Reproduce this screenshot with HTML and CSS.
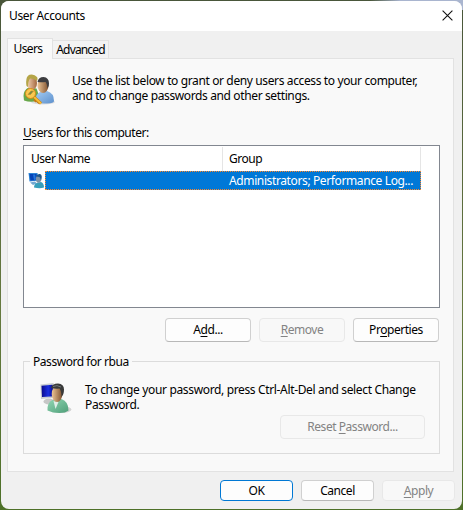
FILE: index.html
```html
<!DOCTYPE html>
<html lang="en">
<head>
    <meta charset="UTF-8">
    <meta name="viewport" content="width=device-width, initial-scale=1.0">
    <title>User Accounts</title>
    <link rel="stylesheet" href="styles.css">
</head>
<body>
    <!-- shared gradients -->
    <svg width="0" height="0" class="defs">
        <defs>
            <linearGradient id="screen" x1="0" y1="0" x2="1" y2="0">
                <stop offset="0" stop-color="#0a0a8c"/>
                <stop offset="0.5" stop-color="#1a2fe0"/>
                <stop offset="1" stop-color="#000070"/>
            </linearGradient>
            <linearGradient id="skin" x1="0" y1="0" x2="1" y2="0">
                <stop offset="0" stop-color="#edc596"/>
                <stop offset="1" stop-color="#80522f"/>
            </linearGradient>
            <linearGradient id="fair" x1="0" y1="0" x2="1" y2="0">
                <stop offset="0" stop-color="#f4d3b4"/>
                <stop offset="1" stop-color="#a4683f"/>
            </linearGradient>
            <linearGradient id="green" x1="0" y1="0" x2="1" y2="1">
                <stop offset="0" stop-color="#91d6b3"/>
                <stop offset="1" stop-color="#4f9f79"/>
            </linearGradient>
            <linearGradient id="blue" x1="0" y1="0" x2="1" y2="1">
                <stop offset="0" stop-color="#a5cdf3"/>
                <stop offset="1" stop-color="#5d90cd"/>
            </linearGradient>
        </defs>
    </svg>

    <div class="window">
        <header class="titlebar">
            <span class="title">User Accounts</span>
            <svg class="close" width="11" height="11" viewBox="0 0 11 11">
                <path d="M.6.6l9.8 9.8M10.4.6L.6 10.4" fill="none" stroke="#111" stroke-width="1.1"/>
            </svg>
        </header>

        <nav class="tabs">
            <div class="tab active">Users</div>
            <div class="tab">Advanced</div>
        </nav>

        <main class="panel">
            <div class="intro">
                <svg width="32" height="32" viewBox="0 0 32 32">
                    <ellipse cx="20" cy="28" rx="12" ry="2.5" fill="#ccc" opacity=".6"/>
                    <path d="M.5 22q0-6 5-8.500l8 1 4 11q-8 4-16.500 1z" fill="#69a84b"/>
                    <ellipse cx="9" cy="9" rx="5" ry="7" fill="url(#fair)"/>
                    <path d="M3.500 12q-1.500-9 3-11.200Q11-.5 14 3q1 1.500 0 4-3-3-7-2.500Q5 7 5 13z" fill="#b5a548"/>
                    <path d="M13 28q-1-8 4-10l7-1q7 2 7 10 0 2-7 2.500-7 .5-11-1.500z" fill="url(#blue)"/>
                    <ellipse cx="20" cy="11.500" rx="5.500" ry="7.500" fill="url(#skin)"/>
                    <path d="M14.500 8q1-5 6-5 5.500.5 5.500 6.500 0 3-1.500 5-.5-5-2-6.500-4 .5-8 0z" fill="#3d3d40"/>
                    <path d="M10 22l8 7.500M13.500 25l-2 2.500M16 27l-1.500 2" fill="none" stroke="#c57a10" stroke-width="3"/>
                    <path d="M10 22l8 7.500" fill="none" stroke="#f8bd35" stroke-width="2"/>
                    <circle cx="7.500" cy="19.500" r="5" fill="#f9c950" stroke="#d48a18"/>
                    <path d="M5 20.500l3-3.500h2.500l-3 3.500z" fill="#718e4a" stroke="#c88a24" stroke-width=".6"/>
                </svg>
                <p>Use the list below to grant or deny users access to your computer,<br>and to change passwords and other settings.</p>
            </div>

            <div class="list-label"><u>U</u>sers for this computer:</div>
            <div class="list">
                <div class="row head">
                    <span class="col">User Name</span>
                    <span class="col">Group</span>
                </div>
                <div class="row user">
                    <svg width="18" height="17" viewBox="0 0 17 16">
                        <path d="M.5.500l9 0 1 7.500-9 1z" fill="#2e85d6"/>
                        <path d="M1.500 1.500h7l1 6-7 .5z" fill="#0544b8"/>
                        <path d="M5 2h2l1 5-2 .500z" fill="#2275dc"/>
                        <path d="M2 10l5-1 2 2-4 1.500z" fill="#74a9d1"/>
                        <path d="M6 15q0-4 4-5l3-.5q3 1 3 5.500-4 1.500-10 0z" fill="#369fbb"/>
                        <ellipse cx="10.500" cy="6.500" rx="2.600" ry="3.800" fill="#7c91a5"/>
                        <path d="M8 4q1-3 4-2.500 3 1 1 7-.5-3-1.500-4z" fill="#215887"/>
                    </svg>
                    <div class="selection">Administrators; Performance Log...</div>
                </div>
            </div>

            <div class="list-buttons">
                <button><span>A<u>d</u>d...</span></button>
                <button disabled><span><u>R</u>emove</span></button>
                <button><span>Pr<u>o</u>perties</span></button>
            </div>

            <fieldset class="password">
                <legend>Password for rbua</legend>
                <div class="hint">
                    <svg width="32" height="32" viewBox="0 0 32 32">
                        <ellipse cx="9" cy="18.500" rx="5.500" ry="3" fill="#c7c7c7"/>
                        <ellipse cx="21" cy="26.500" rx="10.500" ry="3.500" fill="#bbb" opacity=".6"/>
                        <path d="M.5 1.500l13-1.500 3 14.500L1 16z" fill="#c9ced1"/>
                        <path d="M1.500 2.800l11-1 2.500 11.500-13 .7z" fill="url(#screen)"/>
                        <path d="M7.500 27.500q-.5-8 5-10.500l9-1q7 2.500 7 11.500-3 2.500-9 2.500-7 0-12-2.500z" fill="url(#green)"/>
                        <path d="M13.500 18l2 8 3-7z" fill="#e0eee8"/>
                        <ellipse cx="17" cy="11" rx="5.300" ry="8" fill="url(#skin)"/>
                        <path d="M11 5q1-4.500 7-4.500 6 .5 6 6 0 5-2.500 7.500 0-6-2-8.500-3.500.5-8.500-.5z" fill="#393a3a"/>
                        <path d="M13 3.500q4-2 8 .5" fill="none" stroke="#73797a"/>
                    </svg>
                    <p>To change your password, press Ctrl-Alt-Del and select Change<br>Password.</p>
                </div>
                <button disabled class="reset"><span>Reset <u>P</u>assword...</span></button>
            </fieldset>
        </main>

        <footer class="actions">
            <button class="default">OK</button>
            <button>Cancel</button>
            <button disabled><span><u>A</u>pply</span></button>
        </footer>
    </div>
</body>
</html>
```
FILE: styles.css
```css
* {
    box-sizing: border-box;
}
body {
    margin: 0;
    padding: 1px;
    height: 510px;
    overflow: hidden;
    background:
        linear-gradient(to right, transparent 370px, #a9b5cf 400px) top / 100% 10px no-repeat,
        linear-gradient(to bottom, #49563a, #66793f 60%, #4d7028);
    font-family: "Noto Sans", "Open Sans", sans-serif;
    font-size: 12px;
    line-height: 15px;
    letter-spacing: -0.45px;
    color: #000;
}
.defs {
    position: absolute;
}
p {
    margin: 0;
    white-space: nowrap;
}
u {
    text-underline-offset: 2px;
    text-decoration-thickness: 1px;
    text-decoration-skip-ink: none;
}
.window {
    height: 508px;
    background: #f0f0f0;
    border-radius: 8px;
    overflow: hidden;
}
.titlebar {
    display: flex;
    justify-content: space-between;
    align-items: center;
    height: 30px;
    padding: 0 9px 1px 8px;
    background: #fff;
    letter-spacing: -0.37px;
}
.close {
    margin-bottom: 1px;
}
.tabs {
    display: flex;
    align-items: flex-end;
    height: 27px;
    padding-left: 6px;
}
.tab {
    display: flex;
    justify-content: center;
    align-items: center;
    width: 56px;
    height: 18px;
    border: 1px solid #e2e2e2;
    border-bottom: 0;
    border-left: 0;
    background: #f3f3f3;
    letter-spacing: -0.85px;
}
.tab.active {
    position: relative;
    width: 46px;
    height: 21px;
    margin-bottom: -1px;
    padding: 0 4px 1px 0;
    border-left: 1px solid #e2e2e2;
    background: #f9f9f9;
    letter-spacing: -0.6px;
}
.panel {
    width: 447px;
    height: 414px;
    margin-left: 6px;
    padding: 14px 13px 0 15px;
    border: 1px solid #e2e2e2;
    background: #f9f9f9;
}
.intro {
    display: flex;
    gap: 17px;
    height: 52px;
    letter-spacing: -0.375px;
}
.intro svg {
    margin-top: 1px;
}
.list-label {
    height: 20px;
}
.list {
    height: 163px;
    padding: 1px;
    border: 1px solid #828790;
    background: #fff;
}
.row {
    display: flex;
}
.head {
    height: 24px;
    line-height: 24px;
}
.col {
    width: 198px;
    padding-left: 6px;
    border-right: 1px solid #e5e5e5;
}
.user {
    padding-left: 3px;
    letter-spacing: -0.38px;
}
.user svg {
    width: 17px;
    margin-top: 1px;
}
.selection {
    width: 376px;
    height: 19px;
    padding-left: 183px;
    border: 1px dotted #ff8728;
    background: #0078d7;
    color: #fff;
    line-height: 18px;
    white-space: nowrap;
}
.list-buttons {
    display: flex;
    justify-content: flex-end;
    gap: 8px;
    margin-top: 10px;
    padding-right: 1px;
}
button {
    display: flex;
    justify-content: center;
    align-items: center;
    width: 86px;
    height: 24px;
    padding: 0 0 1px;
    border: 1px solid #d0d0d0;
    border-bottom-color: #b8b8b8;
    border-radius: 4px;
    background: #fdfdfd;
    color: #000;
    font: inherit;
    letter-spacing: inherit;
}
button:disabled {
    border-color: #e8e8e8;
    background: #f8f8f8;
    color: #838383;
}
.password {
    height: 100px;
    margin: 12px 0 0;
    padding: 13px 14px 0 16px;
    border: 1px solid #dcdcdc;
}
.password legend {
    margin-left: -10px;
    padding: 0 3px;
}
.hint {
    display: flex;
    gap: 13px;
    height: 33px;
    letter-spacing: -0.35px;
}
.hint svg {
    margin-top: 1px;
}
.reset {
    width: 145px;
    margin-left: auto;
}
.actions {
    display: flex;
    justify-content: flex-end;
    gap: 8px;
    padding: 8px 7px 0 0;
}
.actions button {
    width: 73px;
    height: 21px;
}
.actions .default {
    border-color: #0078d4;
}
```
